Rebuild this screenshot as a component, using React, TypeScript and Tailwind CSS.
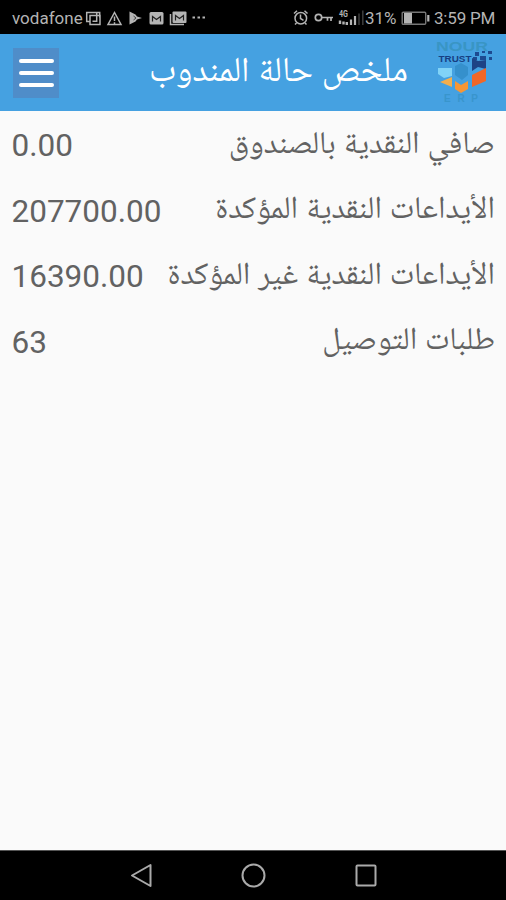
const rows = [
  { label: 'صافي النقدية بالصندوق', value: '0.00' },
  { label: 'الأيداعات النقدية المؤكدة', value: '207700.00' },
  { label: 'الأيداعات النقدية غير المؤكدة', value: '16390.00' },
  { label: 'طلبات التوصيل', value: '63' },
];

function NotificationIcons() {
  return (
    <svg width="124" height="18" viewBox="83 9 124 18" fill="none" stroke="#b4b4b4" strokeWidth="1.5" className="shrink-0">
      <path d="M90 21.500h-3.300v-9h10v3M90 15.500h10v9H90zM92.500 21.300h4.200v-5.500M96.500 12.500h3.200v5" />
      <path d="M114.500 12.500l-6.500 12h13zM114.500 16.500v4.500M114.500 22.200v1.500" />
      <path d="M129.500 11.500l6 3 1.500 2 5 1.500-5 1.500-1.500 2-6 3z" fill="#b4b4b4" stroke="none" />
      <path d="M133.500 16l2.500 2-2.500 2" stroke="#444" strokeWidth="1" />
      <rect x="149.500" y="12" width="14" height="12.500" rx="1.500" fill="#b4b4b4" stroke="none" />
      <path d="M152.500 21.500v-5l4 3 4-3v5" stroke="#222" strokeWidth="1.200" />
      <path d="M170.500 14v10.500H184" />
      <rect x="172.500" y="11.500" width="14" height="11.500" rx="1" fill="#b4b4b4" stroke="none" />
      <path d="M175.500 20.500v-5l4 3 4-3v5" stroke="#222" strokeWidth="1.200" />
      <path d="M192.500 17.500h2.500M197.500 17.500h2.500M202.500 17.500h2.500" strokeWidth="1.800" />
    </svg>
  );
}

function SystemIcons() {
  return (
    <svg width="73" height="20" viewBox="291 8 73 20" fill="none" stroke="#b4b4b4" strokeWidth="1.500" className="shrink-0">
      <circle cx="299.800" cy="18.200" r="5.800" />
      <path d="M299.500 14.500v4l3 1.800M293 13.500l3-2.800M306.500 13.500l-3-2.800M295.500 23l-1.500 1.500M304 23l1.500 1.500" />
      <circle cx="317.500" cy="17.500" r="3.200" strokeWidth="1.700" />
      <path d="M321 17.500h11M326.500 18v2.800M330 18v3" strokeWidth="1.700" />
      <text x="338" y="17" fill="#b4b4b4" stroke="none" fontFamily="Roboto" fontSize="9" fontWeight="700" textLength="9" lengthAdjust="spacingAndGlyphs">4G</text>
      <path d="M339 20.500v3.500M342.500 21.500v3M345.800 22v3" strokeWidth="2.400" />
      <path d="M350 19.500v5.500M354 16v9" strokeWidth="2.200" />
      <path d="M358 13.500v11.500M361.800 10.500v14.500" stroke="#3a3a3a" strokeWidth="1.600" />
    </svg>
  );
}

function StatusBar() {
  return (
    <div className="flex h-[34px] items-center justify-between bg-black pt-[2px] pr-[10px] pl-[12px] text-[#b4b4b4]">
      <div className="flex items-center">
        <span className="w-[71px] text-[17px] leading-none whitespace-nowrap">vodafone</span>
        <NotificationIcons />
      </div>
      <div className="flex items-center text-[17px] leading-none whitespace-nowrap">
        <SystemIcons />
        <span className="w-[36px]">31%</span>
        <svg width="29" height="14" viewBox="0 0 29 14" fill="none">
          <rect x="1.200" y="1.200" width="23.500" height="12" rx="1" stroke="#777" strokeWidth="1.400" />
          <path d="M3 2h8v10.500H3z" fill="#b4b4b4" />
          <path d="M27.300 4v6.500" stroke="#b4b4b4" strokeWidth="2.200" />
        </svg>
        <span className="ml-[4px] w-[62px] tracking-[-0.2px]">3:59 PM</span>
      </div>
    </div>
  );
}

function Logo() {
  return (
    <svg width="62" height="68" viewBox="434 36 62 68" className="shrink-0" fontFamily="'Liberation Sans', Arial, sans-serif" fontWeight="700">
      <text x="436" y="47.500" fontSize="12" fill="#3995c4" textLength="52" lengthAdjust="spacingAndGlyphs">NOUR</text>
      <text x="438.500" y="58.500" fontSize="9" fill="#173f83" textLength="33" lengthAdjust="spacingAndGlyphs">TRUST</text>
      <path d="M475 49h4v4h-4zM480 53h6v4h-6zM482 48h3v2h-3zM488 48h4v3h-4zM489 54h3v3h-3zM473 54h4v3h-4z" fill="#1d4a91" />
      <path d="M472 55l6 3 8-1v9l-8-2-6 4z" fill="#1d4285" />
      <path d="M455 63l6-3 7 4v8l-6 5-7-5z" fill="#3590cc" />
      <path d="M438 65h14v8l-8 2-6-4z" fill="#81d3f7" />
      <path d="M440 79l12-5v10z" fill="#f3ae4d" />
      <path d="M455 78l6 4 7-4v8l-7 4-6-4z" fill="#f79635" />
      <path d="M472 72l14-7v13l-14 6z" fill="#f16727" />
      <text x="444" y="99" fontSize="10" fill="#3995cc" textLength="34">ERP</text>
    </svg>
  );
}

function Header() {
  return (
    <header className="flex h-[77px] items-center bg-[#45a1e1] pr-[10px] pl-[13px]">
      <button aria-label="menu" className="flex h-[50px] w-[46px] flex-col items-center justify-center gap-[8px] bg-[#4f8dc9]">
        <span className="h-[4px] w-[35px] rounded-full bg-white" />
        <span className="h-[4px] w-[35px] rounded-full bg-white" />
        <span className="h-[4px] w-[35px] rounded-full bg-white" />
      </button>
      <h1 dir="rtl" className="mr-[26px] flex-1 pt-[5px] text-[35px] leading-[40px] whitespace-nowrap text-white">
        ملخص حالة المندوب
      </h1>
      <Logo />
    </header>
  );
}

function NavigationBar() {
  return (
    <nav className="flex h-[50px] items-center justify-center border-t border-[#555] bg-black">
      <svg width="260" height="28" viewBox="123 861 260 28" fill="none" stroke="#aaa" strokeWidth="2" strokeLinejoin="round">
        <path d="M150.500 864v21L132 874.500z" />
        <circle cx="253.500" cy="874.500" r="11" />
        <rect x="356.500" y="864.500" width="19" height="20" rx="1" />
      </svg>
    </nav>
  );
}

export default function App() {
  return (
    <div className="flex h-[900px] w-[506px] flex-col overflow-hidden bg-[#fafafa] font-[Roboto,'Noto_Naskh_Arabic_UI','Noto_Naskh_Arabic','DejaVu_Sans',sans-serif]">
      <StatusBar />
      <Header />
      <main className="flex-1 pt-[2px] text-[#626262]">
        {rows.map((row) => (
          <div key={row.label} className="flex h-[65.500px] items-center justify-between pr-[11px] pl-[11.500px]">
            <span className="text-[31.500px] leading-none">{row.value}</span>
            <span dir="rtl" className="pt-[1px] text-[31.500px] leading-none whitespace-nowrap">{row.label}</span>
          </div>
        ))}
      </main>
      <NavigationBar />
    </div>
  );
}
